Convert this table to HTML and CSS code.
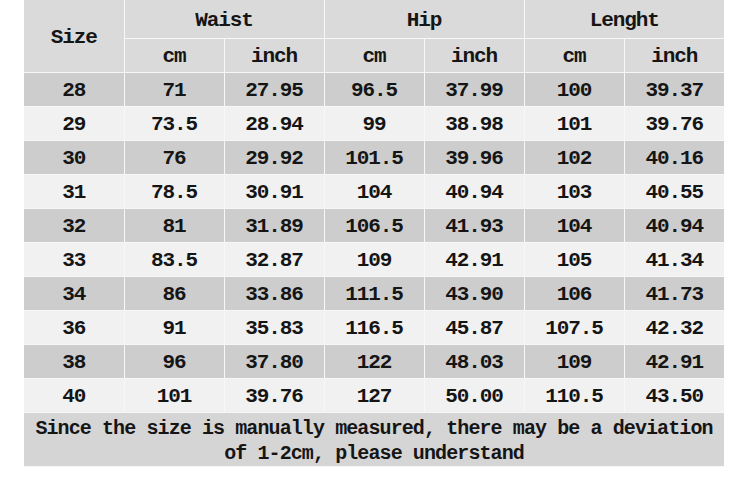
FILE: index.html
```html
<!DOCTYPE html>
<html>
<head>
<meta charset="utf-8">
<link rel="stylesheet" href="styles.css">
</head>
<body>
<table class="chart">
  <colgroup>
    <col class="c"><col class="c"><col class="c"><col class="c"><col class="c"><col class="c"><col class="c">
  </colgroup>
  <thead>
    <tr class="h1">
      <th rowspan="2">Size</th>
      <th colspan="2">Waist</th>
      <th colspan="2">Hip</th>
      <th colspan="2">Lenght</th>
    </tr>
    <tr class="h2">
      <th>cm</th><th>inch</th><th>cm</th><th>inch</th><th>cm</th><th>inch</th>
    </tr>
  </thead>
  <tbody>
    <tr class="dark"><td>28</td><td>71</td><td>27.95</td><td>96.5</td><td>37.99</td><td>100</td><td>39.37</td></tr>
    <tr class="light"><td>29</td><td>73.5</td><td>28.94</td><td>99</td><td>38.98</td><td>101</td><td>39.76</td></tr>
    <tr class="dark"><td>30</td><td>76</td><td>29.92</td><td>101.5</td><td>39.96</td><td>102</td><td>40.16</td></tr>
    <tr class="light"><td>31</td><td>78.5</td><td>30.91</td><td>104</td><td>40.94</td><td>103</td><td>40.55</td></tr>
    <tr class="dark"><td>32</td><td>81</td><td>31.89</td><td>106.5</td><td>41.93</td><td>104</td><td>40.94</td></tr>
    <tr class="light"><td>33</td><td>83.5</td><td>32.87</td><td>109</td><td>42.91</td><td>105</td><td>41.34</td></tr>
    <tr class="dark"><td>34</td><td>86</td><td>33.86</td><td>111.5</td><td>43.90</td><td>106</td><td>41.73</td></tr>
    <tr class="light"><td>36</td><td>91</td><td>35.83</td><td>116.5</td><td>45.87</td><td>107.5</td><td>42.32</td></tr>
    <tr class="dark"><td>38</td><td>96</td><td>37.80</td><td>122</td><td>48.03</td><td>109</td><td>42.91</td></tr>
    <tr class="light"><td>40</td><td>101</td><td>39.76</td><td>127</td><td>50.00</td><td>110.5</td><td>43.50</td></tr>
    <tr class="note"><td colspan="7">Since the size is manually measured, there may be a deviation<br>of 1-2cm, please understand</td></tr>
  </tbody>
</table>
</body>
</html>
```

FILE: styles.css
```css
html, body {
  margin: 0;
  padding: 0;
  background: #ffffff;
}

.chart {
  margin-left: 24px;
  border-collapse: collapse;
  table-layout: fixed;
  width: 700px;
  font-family: "Liberation Mono", "DejaVu Sans Mono", monospace;
  font-weight: bold;
  color: #151515;
}

.chart .c {
  width: 100px;
}

.chart th,
.chart td {
  padding: 4px 0 0 0;
  text-align: center;
  vertical-align: middle;
  border: 1px solid #f7f7f7;
  font-size: 21px;
  line-height: 24px;
  letter-spacing: -1.1px;
  font-weight: bold;
  white-space: nowrap;
}

.chart thead th {
  background: #dadada;
  border-top: none;
}

.chart tr > :first-child {
  border-left: none;
}

.chart tr > :last-child {
  border-right: none;
}

.h1 {
  height: 38px;
}

.h2 {
  height: 34px;
}

.chart tbody tr {
  height: 34px;
}

.dark td {
  background: #cdcdcd;
}

.light td {
  background: #f1f1f1;
}

.chart .note td {
  background: #d5d5d5;
  height: 47px;
  font-size: 20px;
  line-height: 25px;
  letter-spacing: -0.9px;
  padding: 3px 0 0 0;
  white-space: normal;
}
```
